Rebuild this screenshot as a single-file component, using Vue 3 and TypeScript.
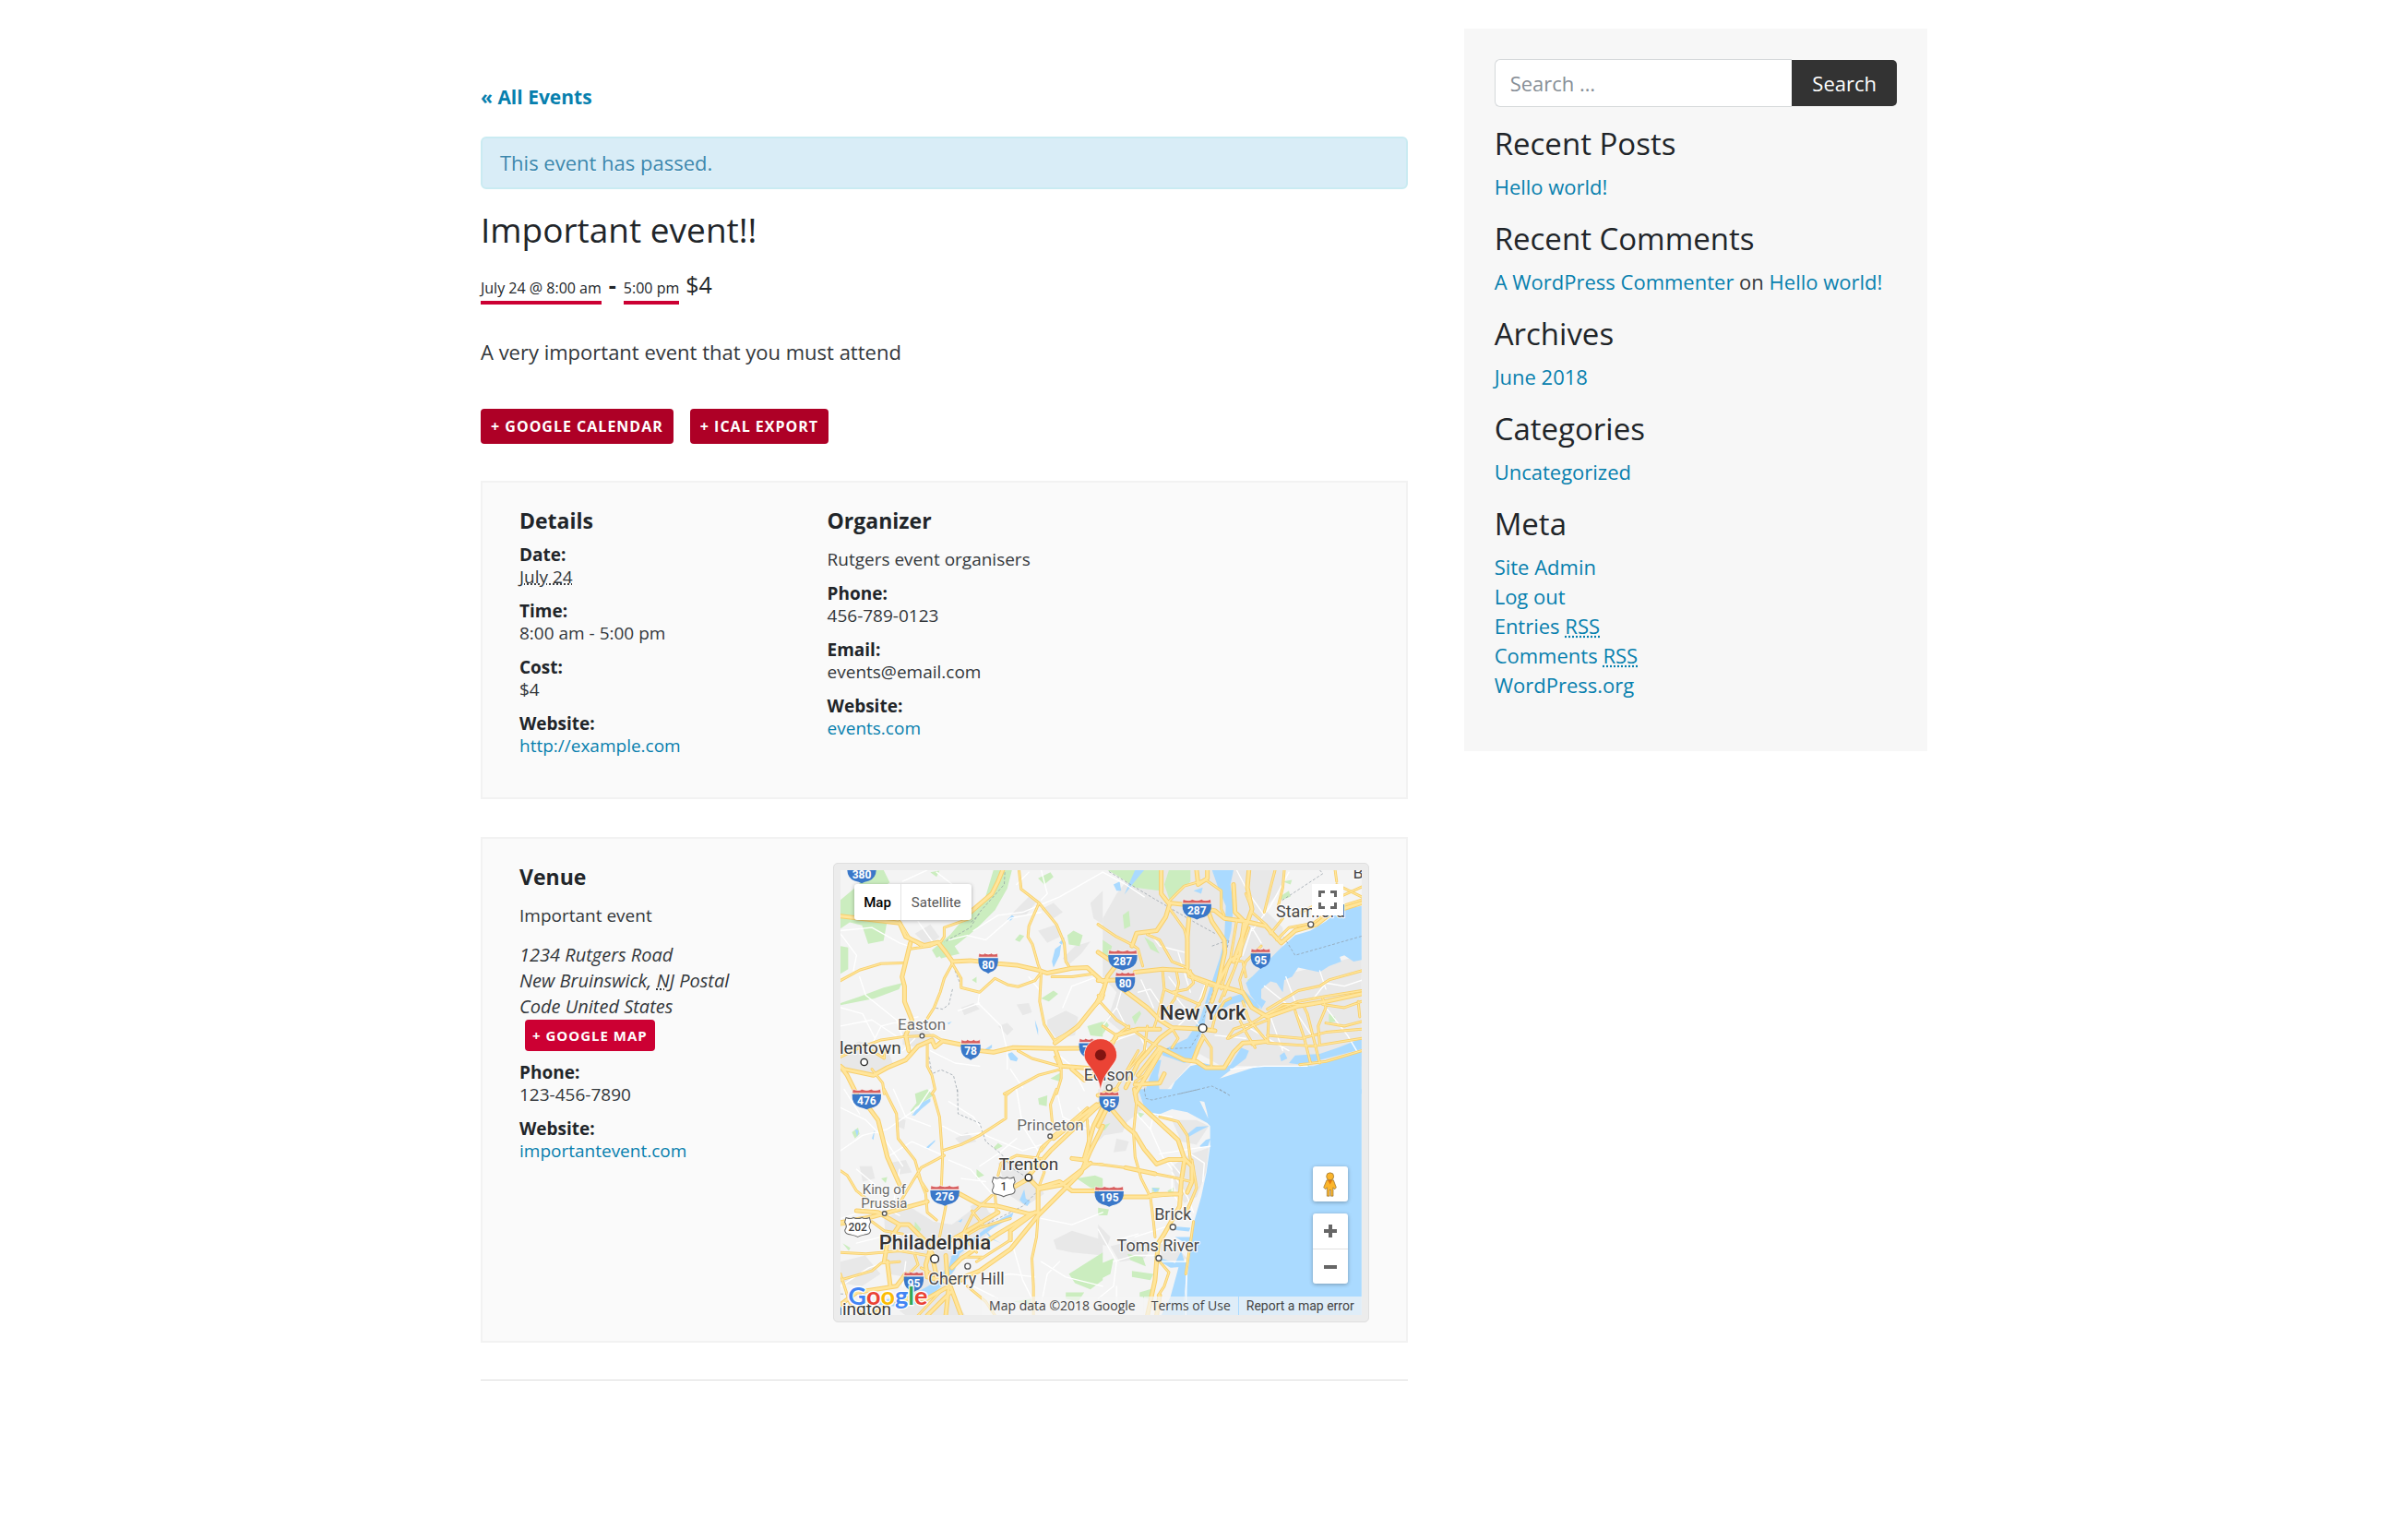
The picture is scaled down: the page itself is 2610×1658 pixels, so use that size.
<script setup lang="ts">
import { ref } from 'vue'

interface Entry { label?: string; value: string; href?: string; abbr?: boolean }
interface Tile { t: string; urban: string; park: string; water: string; minor: string; major: string; motorway: string; dashed: string }
interface Shield { x: number; y: number; n: string; us?: boolean }
interface Place { x: number; y: number; name: string; kind: string; anchor?: 'start' | 'middle' | 'end' }

const query = ref('')

const details: Entry[] = [
  { label: 'Date:', value: 'July 24', abbr: true },
  { label: 'Time:', value: '8:00 am - 5:00 pm' },
  { label: 'Cost:', value: '$4' },
  { label: 'Website:', value: 'http://example.com', href: '#' },
]
const organizer: Entry[] = [
  { label: 'Phone:', value: '456-789-0123' },
  { label: 'Email:', value: 'events@email.com' },
  { label: 'Website:', value: 'events.com', href: '#' },
]
const venue: Entry[] = [
  { label: 'Phone:', value: '123-456-7890' },
  { label: 'Website:', value: 'importantevent.com', href: '#' },
]

const tiles: Tile[] = [
  {
    t: 'translate(0 0)',
    urban: 'M290 260l50-30 30 40-40 30zM620 490l40-5 10 30-30 10zM600 200l60-60 30 10-40 50zM720 540l60-30 40 20-10 60-60 10-30-40zM770 340l40-40 50-15-30 40-40 35zM690 250l60-20 10 40-40 20zM860 160l40-40v110l-30-20zM440 500l40-15 20 20-50 20zM250 580l80-10 30 40-60 20-50-10zM48 640l60-30 90 20 20 50-60 40-110-10zM700 180l40-20 30 30-30 20zM560 560l30-10 20 20-20 20z',
    park: 'M48 150l60-50 20-47 60 0 20 40-40 30 40 50-20 110-50 10-20-60-40-10-30 20zM48 300l25 5v70l-25 15zM545 53l60 0-15 60-40 70-60 60-60 50-50 35-20 10-15-25 60-50 50-60 60-50zM355 310l60-15 20 30-60 15zM48 485l60-20 80-30 60-15-10 20-80 30-110 22zM785 265l20-15 30 15-10 35-35-5zM850 560l50-15v50l-40-5zM615 280l15-18 15 5-15 20zM700 470l40-25 15 10-30 25zM340 60l30-5-10 20zM690 80l40-20 10 15-30 25zM730 730l35-20-5 30zM475 410l15-10 0 20z',
    water: 'M590 215l15-15 8 5-12 12zM735 350l10-40 20-15-5 35-20 40zM680 540l10 30 0 20-8-30zM590 650l15-5 20 20-5 10-20-5zM510 640l30-20 0 10-20 15zM395 550l15-5-10 10zM758 290l18-18-8 24z',
    minor: 'M48 250L150 240 240 290 300 310M48 260L100 330 90 380M300 220L350 290M480 250L560 200 640 190 760 140 900 60M400 280L460 265 520 280 600 210 700 190M500 450L495 485 570 560 590 640 590 700M430 510L500 485M48 560L150 540 240 600M110 400L130 460 230 540 250 600M150 620L180 560 300 530M48 500L120 520 160 600M340 640L420 680 500 690M620 100L660 60M700 53L720 130 700 150M770 500L800 430 880 400M600 700L640 760M660 400L700 450M200 120L280 180M250 90L330 53M360 60L450 130M740 640L800 690 840 770M250 640L290 600',
    major: 'M48 412L110 378 180 357 250 355M410 360L385 405 372 450 352 500 330 535M410 355L440 405 440 435 500 450 550 405 590 425 625 432 680 412 700 385M628 53L635 115 693 160 660 235 657 270 672 295 690 360 700 385M693 160L750 230 775 290 780 350 790 365M700 390L695 480 710 555 745 610M745 605L800 575 830 545 870 500 900 470M580 780L690 720 765 700M625 640L670 665 760 690M765 700L765 730 750 780M735 400L800 400 870 390M240 220L270 270 310 300M270 310L340 300 375 285M385 240L385 270 375 285M385 240L470 210M880 480L900 440M745 660L765 700M330 620L330 690 345 720 355 765 345 780M48 660L110 630 180 605 250 595 350 590 385 610M150 700L185 745 190 780M885 230L900 240M150 640L190 665 190 640M268 640L262 590',
    motorway: 'M48 203L240 225 260 270 320 298 365 288 390 320 412 350 470 347 560 357 620 362 690 378 720 388 800 372 850 370 900 415M575 53L560 90 540 130 470 190M275 290L248 400 256 430 256 480 280 540 260 590 270 640M48 690L60 700 155 720 200 695 260 670 300 625 345 605 355 628 380 608 440 620 500 640 545 645 610 630 740 633 822 632M48 690L70 720 100 780M745 633L765 690 900 700M745 615L820 560 860 510 900 460M800 700L840 735 900 700',
    dashed: 'M582 60L580 100 500 190 470 240 385 287M500 195L470 225M412 440L400 490 380 505 350 500M420 380L440 430M335 660L345 715 375 702 415 720 430 780',
  },
  {
    t: 'translate(885 0)',
    urban: 'M15 210L60 130 120 53 600 53 600 110 540 180 600 240 600 320 500 420 856 330 856 690 660 690 400 690 330 650 230 760 210 780 15 780 15 640 90 590 30 540 60 450 15 400z',
    park: 'M30 53L200 53 200 120 120 110 60 70zM230 53L300 53 300 90 250 140 232 150 215 100zM15 280l30 20-10 40-20-10zM80 200l20-15 5 50-20 10zM150 270l30 20 20 35-30-15zM110 530l25-20 5 10-20 35zM15 550l10-8 10 15-20 30zM485 410l15-10 5 15-10 10zM735 345l20-5-5 25-10 0zM665 690l20-5 0 15zM750 520l20 10 0 15-20 5zM590 140l30-20 5 20-30 10zM600 90l30-5-5 15z',
    water: 'M370 53L440 53 430 100 440 170 432 250 410 340 380 430 355 490 345 560 320 620 310 670 280 680 210 655 205 640 290 600 330 540 362 440 395 340 410 280 415 170 390 110zM856 170L790 180 740 220 690 250 640 265 590 310 560 340 530 370 500 400 480 420 495 460 530 505 545 480 530 470 530 440 560 415 580 420 600 450 605 410 630 400 650 370 720 385 750 365 790 350 785 335 800 330 830 350 856 345zM360 520L420 470 480 450 530 500 510 505 470 480 430 490 380 520zM230 780L250 740 300 690 340 680 410 695 430 685 465 630 490 640 480 665 395 730 520 690 700 690 856 640 856 780zM640 655L720 650 780 630 856 600 856 635 760 660 660 685 620 680zM590 655l15-10 10 20-20 10zM50 100l20-10 5 30-15 0zM120 53l30 0-25 30-40 50zM310 120l30-10-5 20zM150 780l20-60 25-50 10 0-10 50 5 60z',
    minor: 'M15 60L90 100 150 140M170 260L200 300 280 320M130 450L170 440 210 500M500 250L560 170 620 60M450 53L490 130 540 200M500 240L530 290M860 410L800 430 740 420 700 470M610 400L640 480M540 430L640 510 700 600M720 380L740 440M480 560L620 640M560 530L600 640M740 500L810 590 840 640M20 620L130 580 160 640M260 320L300 450M60 500L90 560M240 450L330 560M350 420L320 500 260 560M380 590L480 600M430 700L540 690 680 690M140 410L180 500M230 400L260 440M470 330L500 240M15 560L60 500 80 430',
    major: 'M0 230L60 270 110 295 130 310 145 365M230 155L280 105 350 85M350 85L400 120 400 180 410 200M230 175L280 245 292 290M160 262L200 280 240 350 290 370M210 385L215 440 190 540 180 570M255 385L262 420 250 470 200 540M300 380L310 420 290 440 240 450M215 440L330 490M290 370L295 400 370 430 430 440 470 455M470 455L460 410 480 350 530 300M440 345L470 350 480 400M400 440L430 340 450 220M410 460L460 330 480 220M395 480L440 380 490 240M355 420L340 470 300 530M370 570L380 530 410 480 430 470M420 600L440 570 500 550 600 490 700 490M425 600L500 560 550 540M450 520L480 580 510 630M470 480L490 540 550 610M555 530L550 610 500 620M550 590L660 600 740 580 856 570M550 615L700 625 856 600M640 510L670 600 690 680M670 500L680 520 720 680M730 470L740 500 715 560 720 620M856 380L750 410 720 430 650 445 550 505M856 445L730 465 650 480 530 530M340 590L368 630 368 690M235 560L260 600 240 630M110 570L150 600 200 630M15 560L60 590 100 560M856 640L740 675 655 685M580 280L620 240 700 225 760 180 856 150M600 210L560 260M775 100L856 140M640 200L700 170 775 145 856 108M500 190L545 230 560 260M575 53L560 110 540 190M605 53L600 110 585 170M480 130L500 180 485 230M770 53L775 90M10 470L0 460M130 640L90 710 60 760M200 640L150 720 120 740M60 600L10 630M160 560L150 640 100 700M730 490L800 500 856 480M740 550L800 560 856 545M845 480L850 530M0 475L60 540 100 565',
    motorway: 'M205 53L205 130 232 165 220 205 190 250 125 258 110 300M232 160L280 165 380 185 410 210 480 220 545 235 595 290 640 250 710 230 760 190 856 160M320 53L325 100 355 80 355 53M355 180L370 220 410 280 412 320 390 420 370 480M295 210L290 270 290 370M120 385L210 375 290 380 310 400 380 425 470 450 500 500 550 530 650 495 740 480 856 455M440 100L445 190 475 220 460 330 430 345 380 440M490 53L485 110 500 180 440 350M0 320L60 360 30 400 10 470M60 410L0 412M80 440L160 500 200 540 240 565 340 570 380 575M90 760L130 680 200 600 240 570M130 720L200 630 280 670 320 675 350 695 410 695 440 645 470 615 550 610M310 670L325 630 340 600M0 700L60 590 130 570 200 570M120 780L170 700 205 640M120 750L200 745 215 715',
    dashed: 'M35 58L180 145 300 215 385 262M370 300L425 280 410 350 340 540M205 635L300 630 330 580M585 160L730 65 720 53M856 268L640 330 600 265M155 745L150 770M265 780L370 755 420 780',
  },
  {
    t: 'translate(0 765)',
    urban: 'M190 420l80-40 80 50 60 10 80-60 60 30-20 60-80 60-60 110 60 90 20 40-150 10-80-60 40-100-80-30zM470 380l40-20 20 40-40 40zM110 250l40 0 10 40-40 10zM560 240l60-10 50 50 40 60-60 40-60-40zM740 490l60-30 100 30 0 50-100-10-50-10zM200 240l60-10 20 40-60 10zM48 560l80-20 50 60-60 40-70-10zM420 160l40-20 30 30-50 10zM190 540l60-20 60 30-50 60-60-10zM230 90l30 10-5 30-25-10z',
    park: 'M290 15l40-15 20 20-30 20-30 20-10 20-5-10 20-25zM690 30l30-10-2 35-25-5zM490 260l25 20-25 10zM815 290l60-10 25 10v40l-40-10zM790 600l110-70v90l-40 30-50-20zM545 190l15-15 15 10-20 10zM85 140l20-15 5 20-15 15zM780 660l60 0-20 30-40-10zM610 690l60-10-10 20zM290 430l20 25-10 20-12-20zM180 290l20-5-5 20zM55 500l25 15-5 10z',
    water: 'M280 85l30-40 30-15 0 10-30 25-20 20zM325 190l30-25 0 5-25 25zM640 370l-10-10 15-35 5 30 15 10-10 15zM400 550l60-50 50-40 60-40 40-20-5 15-60 35-50 35-60 50-15 50-40 50-60 60-100 10-50-5 0-15 100-10 70-40 60-60 10-35zM510 450l40 40 20 10-35-15zM150 160l10-30-5 35zM95 130l12 5-5 20zM430 430l15-10-5 12z',
    minor: 'M48 60L130 100 190 160 250 250M48 200L120 150 200 130 300 60 340 0M200 220L280 170 370 210M60 0L110 80M220 0L260 90 340 120M400 40L480 90 520 150M380 120L440 150 520 140M520 150L640 200 700 180M620 0L640 120 690 200M500 250L560 210 620 160M440 290L520 300M700 420L800 440 900 400M700 560L780 610 900 640M600 480L640 620 680 700M540 610L600 600 680 610M48 420L180 380 240 410M240 260L220 370M100 260L160 310M400 230L470 260 540 340M48 640L140 580 200 560M230 480L300 540M700 700L720 600 760 560M820 60L870 130M250 640L260 560M480 640L560 680M750 0L770 90 850 130M100 500L180 480 280 470',
    major: 'M190 0L230 80 235 160 290 230 310 300 330 330M350 20L370 90 378 200 380 215M378 200L440 180 500 150 585 95 585 20 610 0M380 215L375 330M385 215L310 255 270 320 240 370M300 280L325 340 330 400 360 425M48 265L70 280 100 330 150 370M390 380L370 480M550 340L555 400 480 450 420 480M48 530L130 535 240 525 330 540M48 620L150 590 180 565 240 560M48 600L80 700 130 735M440 470L490 530M440 480L480 400 540 345M690 410L685 480 670 550 675 640 675 735M735 100L730 50 750 0M740 130L735 100M700 200L740 150 830 80M670 260L700 190 850 60M560 280L570 240 620 215 700 225 710 270 695 310M600 420L500 450 430 490M380 650L300 735M460 640L520 690 550 735M440 545L510 545M600 460L620 440M490 560L600 490M850 100L855 190 840 235M290 540L300 570 270 600M840 240L900 245M150 430L190 460 250 470M475 395L510 440M48 440L120 430M310 580L350 600',
    motorway: 'M140 60L170 100 200 220 240 310M48 433L150 415 240 390 330 365M435 340L500 375 560 380 660 405 690 400 690 320 660 290 590 330 555 335M100 395L170 400 240 440 270 440 330 500 350 545M240 440L200 500 190 560M340 520L325 570 330 610 370 620M390 540L395 610 440 620M350 560L360 610 400 630M400 630L500 590 600 520 690 410 830 270 860 200 900 120M600 490L600 460 680 400M690 325L770 310 860 240M690 320L760 300 800 330 880 330M800 225L840 230M410 580L440 550 560 470 660 410M410 490L560 400M405 640L440 735M400 640L390 735M48 700L100 660 230 640 260 600M200 560L210 640M150 735L230 680 330 680 400 640M330 735L405 660M660 280L730 200 900 40M850 240L840 225 870 120 900 60M740 160L880 50',
    dashed: 'M428 0L430 80 500 110 520 170 570 210 610 260 660 290 690 330 640 380 480 460M48 665L190 670',
  },
  {
    t: 'translate(885 765)',
    urban: 'M0 0L130 0 150 60 90 110 80 140 20 150 0 170zM30 120l40-20 5 30-40 10zM240 250l60-40 60-20-10 80-30 80-40 20-30-50zM240 100l80 0 40 20-40 60-50-10zM40 510l80-20 60 20-30 40-80 10zM200 500l60 20 30 30-80 20zM0 440l40 40-10 30-30-10zM60 160l40 10-10 30-40 5z',
    park: 'M0 385l35 5-5 20-30 0zM10 120l30-10-20 25zM95 535l50 10 10 30-50-20zM0 570l50-20-10 50-40 20zM110 590l70 10-10 20-60-10zM135 660l50-15-20 35-30-5zM175 320l25 0-5 15-20-2zM225 330l20-10-2 30zM130 75l20 5-15 15z',
    water: 'M130 0L150 60 190 85 240 65 290 75 355 110 364 120 364 185 352 270 335 350 312 430 302 500 292 590 275 735 856 735 856 0zM285 150l35-28 40-2-30 15-40 22zM330 185l20-20 15-5-8 25-20 5zM240 445l60 5-5 12-50-5zM180 540l70 25 20-40 15 50-50 5-50-30zM205 735l30-60 30-110 25-5-15 175zM250 480l50 0-5 30-10-10zM175 320l25 5-15 10z',
    minor: 'M120 75L170 130 210 220 240 260M170 130L180 80 240 90M200 210L330 190 364 185M300 210L345 240 340 300M240 270L290 350 310 400M240 280L240 330M0 680L50 640 60 560 0 455M120 480L180 460 240 440M50 560L120 540 200 540M60 640L60 720M250 350L280 390 300 410M285 735L288 590M130 470L60 490M190 560L290 560M230 230L280 290',
    major: 'M125 40L115 140 120 220 140 290 170 350 180 430 185 480M200 90L260 105 290 150 300 230M0 243L90 255M185 275L240 285 300 300M305 230L320 320 290 395M310 430L300 500 285 600M320 320L290 390M200 560L230 595 215 640 195 670M170 350L260 340M50 70L80 110 120 145',
    motorway: 'M0 120L30 60M40 60L90 120 120 145 150 195 190 243 230 228 280 228M118 0L125 40 200 110 260 165 280 225 305 250 305 300 290 335M280 235L270 300 265 380 215 470 195 500 185 620 160 735M80 350L160 350 180 342 270 340M90 255L185 275M200 670L190 735M0 20L60 0',
    dashed: 'M150 0L155 30 175 35 330 0M395 0L430 22',
  },
]

const shields: Shield[] = [
  { x: 117, y: 62, n: '380' }, { x: 528, y: 355, n: '80' }, { x: 471, y: 636, n: '78' }, { x: 855, y: 632, n: '78' },
  { x: 133, y: 797, n: '476' }, { x: 1206, y: 180, n: '287' }, { x: 965, y: 345, n: '287' }, { x: 973, y: 417, n: '80' },
  { x: 1413, y: 340, n: '95' }, { x: 387, y: 1110, n: '276' }, { x: 286, y: 1390, n: '95' }, { x: 921, y: 805, n: '95' },
  { x: 921, y: 1113, n: '195' }, { x: 578, y: 1082, n: '1', us: true }, { x: 104, y: 1213, n: '202', us: true },
]

const places: Place[] = [
  { x: 312, y: 573, name: 'Easton', kind: 'town' },
  { x: 245, y: 651, name: 'Allentown', kind: 'large', anchor: 'end' },
  { x: 1225, y: 538, name: 'New York', kind: 'city' },
  { x: 1575, y: 207, name: 'Stamford', kind: 'mid' },
  { x: 1713, y: 80, name: 'Bridgeport', kind: 'mid', anchor: 'start' },
  { x: 920, y: 738, name: 'Edison', kind: 'mid' },
  { x: 730, y: 898, name: 'Princeton', kind: 'town' },
  { x: 659, y: 1029, name: 'Trenton', kind: 'large' },
  { x: 190, y: 1105, name: 'King of', kind: 'small' },
  { x: 190, y: 1152, name: 'Prussia', kind: 'small' },
  { x: 355, y: 1287, name: 'Philadelphia', kind: 'city' },
  { x: 457, y: 1400, name: 'Cherry Hill', kind: 'mid' },
  { x: 213, y: 1497, name: 'Wilmington', kind: 'large', anchor: 'end' },
  { x: 1128, y: 1191, name: 'Brick', kind: 'mid' },
  { x: 1080, y: 1292, name: 'Toms River', kind: 'mid' },
]

const dots: number[][] = [
  [313, 592, 7], [125, 677, 11], [1225, 567, 13], [1576, 230, 9], [921, 760, 9], [729, 918, 7],
  [659, 1052, 11], [191, 1169, 7], [354, 1316, 13], [461, 1340, 9], [1128, 1213, 9], [1082, 1314, 9],
]

const half = (n: string): number => (n.length > 2 ? 47 : 32)
const crown = (n: string): string => {
  const w = half(n)
  return `M${-w} -19L${-w + 2} -32Q${-w / 2} -25 ${-w / 3} -32Q0 -25 ${w / 3} -32Q${w / 2} -25 ${w - 2} -32L${w} -19Z`
}
const body = (n: string): string => {
  const w = half(n)
  return `M${-w} -16H${w}Q${w + 2} 16 ${w / 2} 26Q${w / 6} 30 0 34Q${-w / 6} 30 ${-w / 2} 26Q${-w - 2} 16 ${-w} -16Z`
}
const usBody = (n: string): string => {
  const w = n.length > 2 ? 42 : 37
  return `M${-w + 4} -31Q${-w / 2} -24 ${-w / 3} -31Q0 -24 ${w / 3} -31Q${w / 2} -24 ${w - 4} -31L${w} -16Q${w - 10} -4 ${w} 10Q${w} 24 ${w / 2} 25Q${w / 6} 27 0 32Q${-w / 6} 27 ${-w / 2} 25Q${-w} 24 ${-w} 10Q${-w + 10} -4 ${-w} -16Z`
}
</script>

<template>
  <div class="page">
    <main class="main">
      <p class="back"><a href="#">« All Events</a></p>
      <div class="notice">This event has passed.</div>
      <h1 class="title">Important event!!</h1>
      <div class="schedule">
        <span class="when">July 24 @ 8:00 am</span><b class="dash">-</b><span class="when">5:00 pm</span><span class="price">$4</span>
      </div>
      <p class="lead">A very important event that you must attend</p>
      <div class="export">
        <a class="btn" href="#">+ Google Calendar</a>
        <a class="btn" href="#">+ iCal Export</a>
      </div>

      <section class="box columns">
        <div>
          <h2 class="box-title">Details</h2>
          <dl class="entries">
            <template v-for="e in details" :key="e.label">
              <dt>{{ e.label }}</dt>
              <dd>
                <a v-if="e.href" :href="e.href">{{ e.value }}</a>
                <abbr v-else-if="e.abbr" title="2018-07-24">{{ e.value }}</abbr>
                <template v-else>{{ e.value }}</template>
              </dd>
            </template>
          </dl>
        </div>
        <div>
          <h2 class="box-title">Organizer</h2>
          <p class="name">Rutgers event organisers</p>
          <dl class="entries flush">
            <template v-for="e in organizer" :key="e.label">
              <dt>{{ e.label }}</dt>
              <dd><a v-if="e.href" :href="e.href">{{ e.value }}</a><template v-else>{{ e.value }}</template></dd>
            </template>
          </dl>
        </div>
      </section>

      <section class="box venue">
        <div>
          <h2 class="box-title">Venue</h2>
          <p class="name">Important event</p>
          <address class="address">1234 Rutgers Road<br>New Bruinswick, <abbr title="New Jersey">NJ</abbr> Postal Code United States</address>
          <a class="btn map-link" href="#">+ Google Map</a>
          <dl class="entries flush">
            <template v-for="e in venue" :key="e.label">
              <dt>{{ e.label }}</dt>
              <dd><a v-if="e.href" :href="e.href">{{ e.value }}</a><template v-else>{{ e.value }}</template></dd>
            </template>
          </dl>
        </div>

        <div class="map-frame">
          <div class="map">
            <svg class="map-art" viewBox="48 53 1692 1446" preserveAspectRatio="xMidYMid slice" role="img" aria-label="Map of New Jersey">
              <rect x="48" y="53" width="1692" height="1446" fill="#f4f4f4" />
              <g v-for="q in tiles" :key="'u' + q.t" :transform="q.t"><path :d="q.urban" fill="#e8e8e8" /></g>
              <g v-for="q in tiles" :key="'p' + q.t" :transform="q.t"><path :d="q.park" fill="#cbedbf" /></g>
              <g v-for="q in tiles" :key="'w' + q.t" :transform="q.t"><path :d="q.water" fill="#aadaff" /></g>
              <path d="M1215 803l15 3 8 30 5 25-12-25z" fill="#f4f4f4" />
              <g v-for="q in tiles" :key="'n' + q.t" :transform="q.t"><path :d="q.minor" class="road minor" /></g>
              <g v-for="q in tiles" :key="'d' + q.t" :transform="q.t"><path :d="q.dashed" class="border-line" /></g>
              <g v-for="q in tiles" :key="'a' + q.t" :transform="q.t">
                <path :d="q.major" class="road major-edge" />
                <path :d="q.motorway" class="road motorway-edge" />
              </g>
              <g v-for="q in tiles" :key="'c' + q.t" :transform="q.t">
                <path :d="q.major" class="road major" />
                <path :d="q.motorway" class="road motorway" />
              </g>
              <g v-for="(s, i) in shields" :key="'s' + i" :transform="`translate(${s.x} ${s.y})`">
                <template v-if="s.us">
                  <path :d="usBody(s.n)" fill="#fff" stroke="#666" stroke-width="3" />
                  <text class="us-number" y="13">{{ s.n }}</text>
                </template>
                <template v-else>
                  <path :d="crown(s.n)" fill="#d75f5f" stroke="#fff" stroke-width="2" />
                  <path :d="body(s.n)" fill="#3a78c9" />
                  <text class="shield-number" y="18">{{ s.n }}</text>
                </template>
              </g>
              <circle v-for="(d, i) in dots" :key="'o' + i" :cx="d[0]" :cy="d[1]" :r="d[2]" fill="#fff" :stroke="d[2] > 9 ? '#222' : '#555'" stroke-width="4" />
              <text v-for="p in places" :key="p.name" :x="p.x" :y="p.y" :class="['place', p.kind]" :text-anchor="p.anchor ?? 'middle'">{{ p.name }}</text>
              <path d="M893 774C890 735 876 718 860 695C848 678 840 670 840 654A53 53 0 0 1 946 654C946 670 938 678 926 695C910 718 896 735 893 774Z" fill="#ea4335" stroke="#fff" stroke-width="2" />
              <circle cx="893" cy="654" r="18" fill="#811411" />
              <text class="logo" x="73" y="1464"><tspan fill="#4285f4">G</tspan><tspan fill="#ea4335">o</tspan><tspan fill="#fbbc05">o</tspan><tspan fill="#4285f4">g</tspan><tspan fill="#34a853">l</tspan><tspan fill="#ea4335">e</tspan></text>
            </svg>

            <div class="map-types">
              <button type="button" class="active">Map</button>
              <button type="button">Satellite</button>
            </div>
            <button type="button" class="fullscreen" aria-label="Toggle fullscreen view">
              <svg viewBox="0 0 20 20" width="20" height="20"><path d="M0 0h7v3H3v4H0zM13 0h7v7h-3V3h-4zM0 13h3v4h4v3H0zM17 13h3v7h-7v-3h4z" fill="#666" /></svg>
            </button>
            <div class="map-tools">
              <button type="button" class="tool" aria-label="Street View">
                <svg viewBox="0 0 45 80" width="15" height="27">
                  <path d="M12 26H34L43 50 38 56 33 50V78H25V58H21V78H13V50L8 56 2 50Z" fill="#fbb52c" stroke="#8d6a30" stroke-width="2" />
                  <path d="M15 26H31L23 40Z" fill="#e5790c" />
                  <circle cx="23" cy="14" r="12" fill="#fbb52c" stroke="#8d6a30" stroke-width="2" />
                </svg>
              </button>
              <div class="zoom">
                <button type="button" aria-label="Zoom in"><svg viewBox="0 0 14 14" width="14" height="14"><path d="M5 0h4v5h5v4H9v5H5V9H0V5h5z" fill="#666" /></svg></button>
                <button type="button" aria-label="Zoom out"><svg viewBox="0 0 14 14" width="14" height="14"><path d="M0 5h14v4H0z" fill="#666" /></svg></button>
              </div>
            </div>
            <div class="credits">
              <span>Map data ©2018 Google</span>
              <a href="#">Terms of Use</a>
              <a class="report" href="#">Report a map error</a>
            </div>
          </div>
        </div>
      </section>
      <hr class="rule">
    </main>

    <aside class="sidebar">
      <form class="search" role="search" @submit.prevent>
        <input v-model="query" type="text" placeholder="Search …" aria-label="Search for">
        <button type="submit">Search</button>
      </form>
      <h3>Recent Posts</h3>
      <ul><li><a href="#">Hello world!</a></li></ul>
      <h3>Recent Comments</h3>
      <ul><li><a href="#">A WordPress Commenter</a> on <a href="#">Hello world!</a></li></ul>
      <h3>Archives</h3>
      <ul><li><a href="#">June 2018</a></li></ul>
      <h3>Categories</h3>
      <ul><li><a href="#">Uncategorized</a></li></ul>
      <h3>Meta</h3>
      <ul>
        <li><a href="#">Site Admin</a></li>
        <li><a href="#">Log out</a></li>
        <li><a href="#">Entries <abbr title="Really Simple Syndication">RSS</abbr></a></li>
        <li><a href="#">Comments <abbr title="Really Simple Syndication">RSS</abbr></a></li>
        <li><a href="#">WordPress.org</a></li>
      </ul>
    </aside>
  </div>
</template>

<style>
body { background: #fff; }
</style>

<style scoped>
.page {
  box-sizing: border-box;
  display: grid;
  grid-template-columns: 2fr 1fr;
  gap: 61px;
  align-items: start;
  max-width: 1568px;
  margin: 0 auto;
  font-family: "Open Sans", "Noto Sans", sans-serif;
  font-size: 22px;
  line-height: 34px;
  color: #33373b;
}
.page *, .page *::before, .page *::after { box-sizing: border-box; }
h1, h2, h3, p, dl, dd, ul { margin: 0; padding: 0; }
a { color: #0780ae; text-decoration: none; }
button { font-family: inherit; border: 0; padding: 0; cursor: pointer; }

.main { padding-top: 88px; min-width: 0; }
.back { font-weight: 700; font-size: 21px; }
.notice {
  margin-top: 26px;
  padding: 10px 19px;
  border: 2px solid #caebf2;
  border-radius: 6px;
  background: #d9edf7;
  color: #3a87ad;
  line-height: 33px;
  text-shadow: 0 1px 0 rgba(255, 255, 255, 0.5);
}
.title { margin-top: 23px; font-size: 37px; line-height: 42px; font-weight: 400; color: #212529; }
.schedule { margin-top: 21px; font-size: 25px; color: #212529; }
.when { font-size: 16px; font-weight: 500; line-height: 1; padding-bottom: 3px; border-bottom: 4px solid #cc0033; }
.dash { margin: 0 8px; }
.price { margin-left: 7px; }
.lead { margin-top: 39px; }
.export { display: flex; gap: 18px; margin-top: 45px; }
.btn {
  display: inline-block;
  padding: 0 11px;
  border-radius: 4px;
  background: #ae0026;
  color: #fff;
  font-size: 16px;
  font-weight: 700;
  line-height: 38px;
  letter-spacing: 1px;
  text-transform: uppercase;
}

.box {
  margin-top: 40px;
  padding: 26px 40px 20px;
  border: 2px solid #f2f2f2;
  background: #fafafa;
  font-size: 19px;
  line-height: 24px;
  display: grid;
}
.columns { grid-template-columns: repeat(3, 1fr); column-gap: 80px; }
.venue { grid-template-columns: 276fr 580fr; column-gap: 64px; margin-top: 41px; }
.box-title { font-size: 23px; line-height: 30px; font-weight: 700; color: #212529; }
.entries { margin-top: 10px; }
.entries.flush { margin-top: 0; }
.entries dt { font-weight: 700; color: #212529; }
.entries dd { margin-bottom: 13px; }
.columns .entries { padding-bottom: 11px; }
.name { margin: 15px 0 13px; }
.address { padding: 4px 16px 0 0; font-size: 20px; line-height: 28px; }
.map-link { margin: 0 0 11px 6px; padding: 0 8px; font-size: 15px; line-height: 34px; background: #cc0033; }

.map-frame { padding: 7px; border: 1px solid #dfdfdf; border-radius: 5px; background: #ececec; align-self: start; }
.map { position: relative; height: 482px; overflow: hidden; background: #f4f4f4; font-family: Roboto, "Open Sans", sans-serif; }
.map-art { display: block; width: 100%; height: 100%; }
.road { fill: none; stroke-linejoin: round; stroke-linecap: round; }
.minor { stroke: #fff; stroke-width: 4; }
.major-edge { stroke: #f8cf6c; stroke-width: 9; }
.major { stroke: #ffe69c; stroke-width: 4; }
.motorway-edge { stroke: #f8cf6c; stroke-width: 15; }
.motorway { stroke: #ffe59b; stroke-width: 9; }
.border-line { fill: none; stroke: #8d97a0; stroke-width: 2; stroke-dasharray: 9 6; }
.shield-number { fill: #fff; font-size: 36px; font-weight: 700; text-anchor: middle; }
.us-number { fill: #444; font-size: 36px; font-weight: 500; text-anchor: middle; }
.place { fill: #4a4a4a; stroke: #fff; stroke-width: 7; stroke-opacity: 0.85; stroke-linejoin: round; paint-order: stroke; }
.small { font-size: 45px; fill: #6a6a6a; }
.town { font-size: 51px; fill: #6a6a6a; }
.mid { font-size: 54px; }
.large { font-size: 57px; fill: #3a3a3a; }
.city { font-size: 66px; font-weight: 500; fill: #333; }
.logo { font-family: Lato, sans-serif; font-size: 81px; font-weight: 700; stroke: #fff; stroke-width: 8; paint-order: stroke; }

.map-types { position: absolute; top: 15px; left: 15px; display: flex; box-shadow: 0 1px 4px rgba(0, 0, 0, 0.3); border-radius: 3px; background: #fff; }
.map-types button { height: 39px; padding: 0 11px; background: none; color: #565656; font-size: 15px; }
.map-types button.active { padding: 0 10px; color: #000; font-weight: 500; border-right: 1px solid #e4e4e4; }
.fullscreen { position: absolute; top: 15px; right: 20px; display: grid; place-items: center; width: 34px; height: 34px; background: #fff; }
.map-tools { position: absolute; right: 15px; bottom: 34px; display: grid; gap: 13px; }
.tool, .zoom { width: 38px; border-radius: 3px; background: #fff; box-shadow: 0 1px 4px rgba(0, 0, 0, 0.3); }
.tool { display: grid; place-items: center; height: 38px; }
.zoom button { display: grid; place-items: center; width: 100%; height: 38px; background: none; }
.zoom button + button { border-top: 1px solid #e0e0e0; }
.credits { position: absolute; right: 0; bottom: 0; display: flex; gap: 1px; font-family: "Open Sans", sans-serif; font-size: 14px; line-height: 20px; }
.credits > * { padding: 0 8px; background: rgba(245, 245, 245, 0.7); color: #444; }
.credits .report { font-family: Roboto, sans-serif; }
.rule { margin: 40px 0 0; border: 0; border-top: 1px solid #dcdcdc; }

.sidebar { margin: 31px 0 0; padding: 33px 33px 35px; background: #f7f7f7; }
.search { display: flex; align-items: center; height: 52px; margin-bottom: 20px; }
.search input {
  flex: 1;
  min-width: 0;
  height: 52px;
  padding: 0 16px;
  border: 1px solid #d5d8da;
  border-right: 0;
  border-radius: 6px 0 0 6px;
  background: #fff;
  font: inherit;
  color: #495057;
}
.search input::placeholder { color: #868e96; opacity: 1; }
.search button { height: 50px; padding: 0 22px; border-radius: 0 5px 5px 0; background: #333; color: #fff; font-size: 22px; }
.sidebar h3 { font-size: 33px; line-height: 40px; font-weight: 400; color: #212529; }
.sidebar ul { list-style: none; margin: 10px 0 21px; line-height: 32px; }
</style>
